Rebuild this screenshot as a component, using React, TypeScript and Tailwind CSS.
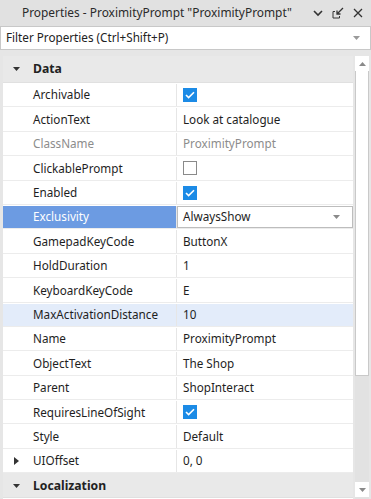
import React from "react";

type Row = {
  name: string;
  value?: string;
  check?: boolean;
  dim?: boolean;
  expand?: boolean;
  state?: "selected" | "hover";
};

const rows: Row[] = [
  { name: "Archivable", check: true },
  { name: "ActionText", value: "Look at catalogue" },
  { name: "ClassName", value: "ProximityPrompt", dim: true },
  { name: "ClickablePrompt", check: false },
  { name: "Enabled", check: true },
  { name: "Exclusivity", value: "AlwaysShow", state: "selected" },
  { name: "GamepadKeyCode", value: "ButtonX" },
  { name: "HoldDuration", value: "1" },
  { name: "KeyboardKeyCode", value: "E" },
  { name: "MaxActivationDistance", value: "10", state: "hover" },
  { name: "Name", value: "ProximityPrompt" },
  { name: "ObjectText", value: "The Shop" },
  { name: "Parent", value: "ShopInteract" },
  { name: "RequiresLineOfSight", check: true },
  { name: "Style", value: "Default" },
  { name: "UIOffset", value: "0, 0", expand: true },
];

function Caret({ className = "" }: { className?: string }) {
  return (
    <svg width="7" height="4" viewBox="0 0 7 4" className={className}>
      <path d="M0 0h7L3.5 4z" fill="currentColor" />
    </svg>
  );
}

function CheckBox({ checked }: { checked: boolean }) {
  if (!checked) {
    return <span className="block h-[14px] w-[14px] border border-[#8a8a8a] bg-white" />;
  }
  return (
    <span className="flex h-[14px] w-[14px] items-center justify-center bg-[#1c8be6]">
      <svg width="10" height="8" viewBox="0 0 10 8">
        <path d="M1 4l2.6 2.6L9 1.2" stroke="white" strokeWidth="1.6" fill="none" />
      </svg>
    </span>
  );
}

function SectionHeader({ label, tall }: { label: string; tall?: boolean }) {
  return (
    <div
      className={`flex items-center border-b border-[#e0e0e0] bg-[#e9e9e9] ${tall ? "h-[27px]" : "h-[25px] pt-[1px]"}`}
    >
      <Caret className="ml-[10px] text-[#333]" />
      <span className="ml-[13px] text-[12.2px] font-bold text-[#222]">{label}</span>
    </div>
  );
}

function PropRow({ row }: { row: Row }) {
  const nameCls =
    row.state === "selected"
      ? "bg-[#6c9be2] text-white"
      : row.state === "hover"
        ? "bg-[#e3ecfa] text-[#1e1e1e]"
        : row.dim
          ? "text-[#8c8c8c]"
          : "text-[#1e1e1e]";
  const valCls = row.state === "hover" ? "bg-[#e3ecfa]" : "bg-white";
  return (
    <div className="grid h-[24.4px] grid-cols-[174px_1fr] border-b border-[#ececec] pt-[1px] text-[11.7px]">
      <div className={`relative flex items-center border-r border-[#e6e6e6] pl-[30px] ${nameCls}`}>
        {row.expand && (
          <svg width="5" height="8" viewBox="0 0 5 8" className="absolute left-[11px] text-[#333]">
            <path d="M0 0l5 4-5 4z" fill="currentColor" />
          </svg>
        )}
        {row.name}
      </div>
      {row.state === "selected" ? (
        <div className="flex items-center justify-between border border-[#bdbdbd] bg-white pl-[5px] pr-[12px] text-[#1e1e1e]">
          {row.value}
          <Caret className="text-[#8a8a8a]" />
        </div>
      ) : (
        <div className={`flex items-center pl-[6px] ${valCls} ${row.dim ? "text-[#8c8c8c]" : "text-[#1e1e1e]"}`}>
          {row.check !== undefined ? <CheckBox checked={row.check} /> : row.value}
        </div>
      )}
    </div>
  );
}

export default function App() {
  return (
    <div
      className="flex h-[499px] w-[371px] flex-col bg-[#e6e6e6]"
      style={{ fontFamily: '"Noto Sans", "Open Sans", sans-serif' }}
    >
      <div className="flex h-[26px] items-center bg-[#e1e1e1] pl-[22px] pr-[8px] text-[11.9px] text-[#2a2a2a]">
        <span className="flex-1 whitespace-nowrap">Properties - ProximityPrompt "ProximityPrompt"</span>
        <div className="flex items-center gap-[9px] text-[#333]">
          <svg width="10" height="7" viewBox="0 0 10 7">
            <path d="M1 1l4 4 4-4" stroke="currentColor" strokeWidth="1.6" fill="none" />
          </svg>
          <svg width="12" height="12" viewBox="0 0 12 12">
            <path d="M1 4.5v6.5h6.5" stroke="currentColor" strokeWidth="1" fill="none" />
            <path d="M1 4.5h2M7.5 11V9" stroke="currentColor" strokeWidth="1" fill="none" />
            <path d="M11 1L5 7M5 3.5V7h3.5" stroke="currentColor" strokeWidth="1.3" fill="none" />
          </svg>
          <svg width="10" height="10" viewBox="0 0 10 10">
            <path d="M1 1l8 8M9 1l-8 8" stroke="currentColor" strokeWidth="1.3" fill="none" />
          </svg>
        </div>
      </div>
      <div className="flex h-[24px] items-center justify-between border border-[#c8c8c8] bg-white pl-[5px] pr-[10px] text-[11.7px] text-[#222]">
        <span>Filter Properties (Ctrl+Shift+P)</span>
        <Caret className="text-[#9a9a9a]" />
      </div>
      <div className="mt-[6px] flex flex-1 pl-[3px] pr-[2px]">
        <div className="flex w-[350px] flex-col bg-white">
          <SectionHeader label="Data" tall />
          {rows.map((r) => (
            <PropRow key={r.name} row={r} />
          ))}
          <SectionHeader label="Localization" />
        </div>
        <div className="ml-[2px] flex w-[14px] flex-col bg-[#e2e2e2] pb-[2px]">
          <div className="flex h-[15px] items-center justify-center bg-white">
            <svg width="7" height="4" viewBox="0 0 7 4">
              <path d="M0 4h7L3.5 0z" fill="#8a8a8a" />
            </svg>
          </div>
          <div className="h-[305px] border-x border-b border-[#c9c9c9] bg-white" />
          <div className="flex-1" />
          <div className="flex h-[15px] items-center justify-center bg-white">
            <Caret className="text-[#8a8a8a]" />
          </div>
        </div>
      </div>
    </div>
  );
}
